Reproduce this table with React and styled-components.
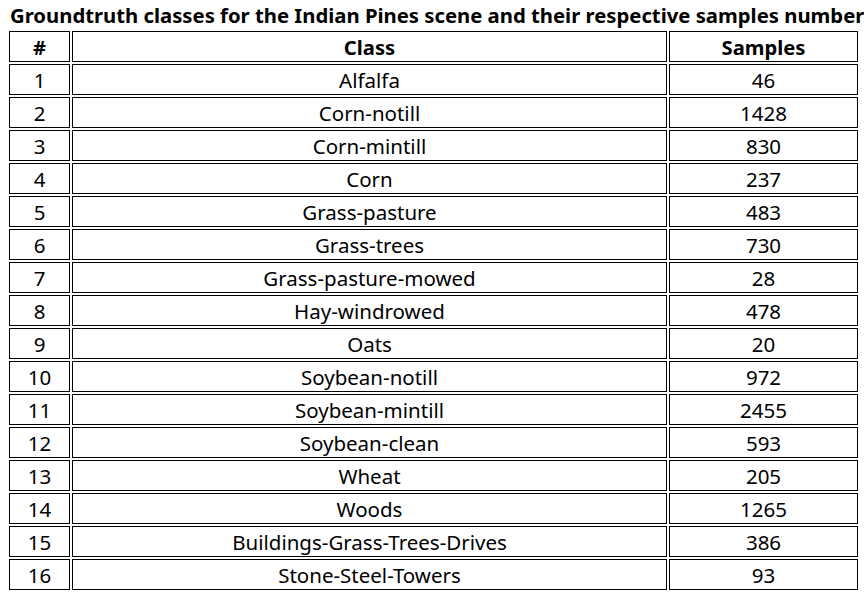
import React from "react";
import styled, { createGlobalStyle } from "styled-components";

const Global = createGlobalStyle`
  html, body { margin: 0; padding: 0; background: #fff; }
  body { font-family: "Noto Sans", "Open Sans", sans-serif; color: #000; }
`;

const Page = styled.div`
  padding: 0 0 0 9px;
  width: 849px;
`;

const Title = styled.div`
  font-weight: 700;
  font-size: 20.3px;
  line-height: 30px;
  height: 31px;
  white-space: nowrap;
  text-align: left;
  padding-left: 1px;
`;

const Table = styled.div`
  display: grid;
  grid-template-columns: 61px 595px 189px;
  column-gap: 2px;
  row-gap: 2px;
`;

const Cell = styled.div`
  height: 31px;
  box-sizing: border-box;
  border: 1px solid #000;
  display: flex;
  align-items: center;
  justify-content: center;
  font-size: ${(p) => (p.$head ? "20.2px" : "20.5px")};
  font-weight: ${(p) => (p.$head ? 700 : 400)};
  white-space: nowrap;
`;

const rows = [
  ["Alfalfa", 46],
  ["Corn-notill", 1428],
  ["Corn-mintill", 830],
  ["Corn", 237],
  ["Grass-pasture", 483],
  ["Grass-trees", 730],
  ["Grass-pasture-mowed", 28],
  ["Hay-windrowed", 478],
  ["Oats", 20],
  ["Soybean-notill", 972],
  ["Soybean-mintill", 2455],
  ["Soybean-clean", 593],
  ["Wheat", 205],
  ["Woods", 1265],
  ["Buildings-Grass-Trees-Drives", 386],
  ["Stone-Steel-Towers", 93],
];

export default function App() {
  return (
    <Page>
      <Global />
      <Title>Groundtruth classes for the Indian Pines scene and their respective samples number</Title>
      <Table>
        <Cell $head>#</Cell>
        <Cell $head>Class</Cell>
        <Cell $head>Samples</Cell>
        {rows.map(([name, n], i) => (
          <React.Fragment key={name}>
            <Cell>{i + 1}</Cell>
            <Cell>{name}</Cell>
            <Cell>{n}</Cell>
          </React.Fragment>
        ))}
      </Table>
    </Page>
  );
}
